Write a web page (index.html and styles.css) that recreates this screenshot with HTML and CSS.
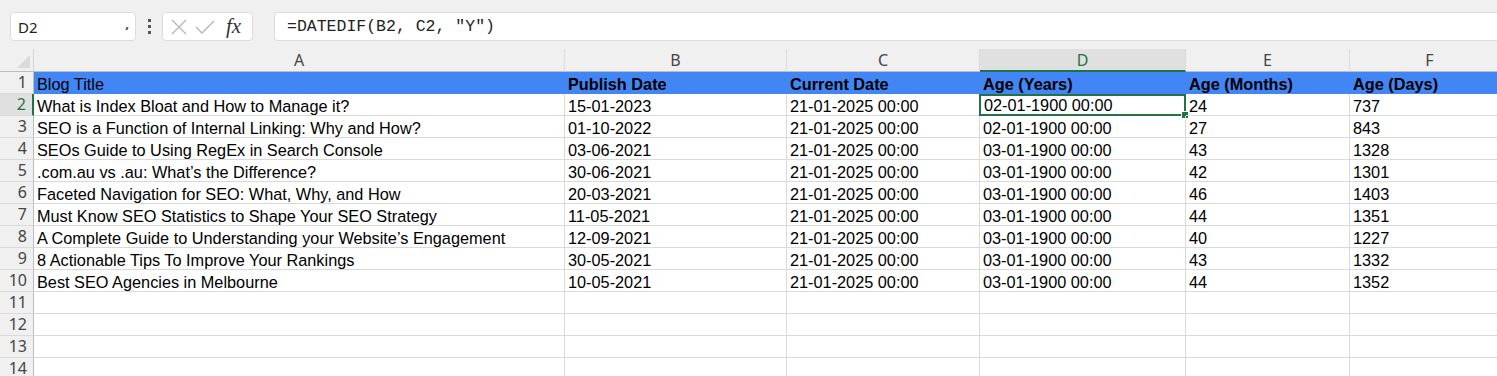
FILE: index.html
```html
<!DOCTYPE html>
<html>
<head>
    <title>Blog Age Sheet</title>
    <link rel="stylesheet" href="styles.css">
</head>
<body>
    <div class="toolbar">
        <div class="name-box">
            <span>D2</span>
            <span class="caret"></span>
        </div>
        <div class="dots"><i></i><i></i><i></i></div>
        <div class="fx-box">
            <svg width="18" height="18" viewBox="0 0 18 18"><path d="M2 2 L16 16 M16 2 L2 16" stroke="#b5b5b5" stroke-width="1.3" fill="none"/></svg>
            <svg width="22" height="18" viewBox="0 0 22 18"><path d="M2 9 L8 15 L20 3" stroke="#b5b5b5" stroke-width="1.3" fill="none"/></svg>
            <span class="fx">fx</span>
        </div>
        <div class="formula">=DATEDIF(B2, C2, "Y")</div>
    </div>

    <div class="sheet">
        <div class="corner"><span></span></div>
        <div class="col-head">A</div>
        <div class="col-head">B</div>
        <div class="col-head">C</div>
        <div class="col-head active">D</div>
        <div class="col-head">E</div>
        <div class="col-head">F</div>
    </div>
    <div id="rows"></div>

    <script>
        // sheet data
        const data = [
            ['Blog Title', 'Publish Date', 'Current Date', 'Age (Years)', 'Age (Months)', 'Age (Days)'],
            ['What is Index Bloat and How to Manage it?', '15-01-2023', '21-01-2025 00:00', '02-01-1900 00:00', '24', '737'],
            ['SEO is a Function of Internal Linking: Why and How?', '01-10-2022', '21-01-2025 00:00', '02-01-1900 00:00', '27', '843'],
            ['SEOs Guide to Using RegEx in Search Console', '03-06-2021', '21-01-2025 00:00', '03-01-1900 00:00', '43', '1328'],
            ['.com.au vs .au: What\u2019s the Difference?', '30-06-2021', '21-01-2025 00:00', '03-01-1900 00:00', '42', '1301'],
            ['Faceted Navigation for SEO: What, Why, and How', '20-03-2021', '21-01-2025 00:00', '03-01-1900 00:00', '46', '1403'],
            ['Must Know SEO Statistics to Shape Your SEO Strategy', '11-05-2021', '21-01-2025 00:00', '03-01-1900 00:00', '44', '1351'],
            ['A Complete Guide to Understanding your Website\u2019s Engagement', '12-09-2021', '21-01-2025 00:00', '03-01-1900 00:00', '40', '1227'],
            ['8 Actionable Tips To Improve Your Rankings', '30-05-2021', '21-01-2025 00:00', '03-01-1900 00:00', '43', '1332'],
            ['Best SEO Agencies in Melbourne', '10-05-2021', '21-01-2025 00:00', '03-01-1900 00:00', '44', '1352']
        ];

        const rows = document.getElementById('rows');
        for (let r = 0; r < 14; r++) {
            const row = document.createElement('div');
            row.className = 'sheet' + (r === 0 ? ' head-row' : '');
            const num = document.createElement('div');
            num.className = 'row-head' + (r === 1 ? ' active' : '');
            num.textContent = r + 1;
            row.appendChild(num);
            const vals = data[r] || ['', '', '', '', '', ''];
            vals.forEach(function(v, c) {
                const cell = document.createElement('div');
                cell.className = 'cell';
                if (r === 0 && c > 0) cell.className += ' bold';
                if (r === 1 && c === 3) {
                    cell.className += ' selected';
                    const h = document.createElement('span');
                    h.className = 'handle';
                    cell.appendChild(h);
                }
                cell.appendChild(document.createTextNode(v));
                row.appendChild(cell);
            });
            rows.appendChild(row);
        }
    </script>
</body>
</html>
```

FILE: styles.css
```css
body { margin: 0; background: #fff; font-family: "Liberation Sans", Arial, sans-serif; overflow: hidden; }

.toolbar { height: 49px; background: #f0f0f0; display: flex; align-items: center; padding: 4px 0 0 10px; box-sizing: border-box; }
.name-box { width: 126px; height: 29px; box-sizing: border-box; background: #fff; border: 1px solid #dcdcdc; border-radius: 4px; display: flex; align-items: center; justify-content: space-between; padding: 0 7px 0 7px; font-family: "Noto Sans", sans-serif; font-size: 15px; color: #222; }
.name-box .caret { width: 2px; height: 3px; background: #555; margin-top: 4px; transform: skewX(-20deg); }
.dots { width: 26px; display: flex; flex-direction: column; align-items: center; gap: 3px; }
.dots i { width: 3px; height: 3px; background: #555; display: block; }
.fx-box { width: 91px; height: 29px; box-sizing: border-box; background: #fff; border: 1px solid #dcdcdc; border-radius: 4px; display: flex; align-items: center; padding-left: 7px; gap: 6px; }
.fx { font-family: "Liberation Serif", serif; font-style: italic; font-size: 21px; color: #333; margin-left: 4px; }
.formula { flex: 1; margin-left: 21px; height: 29px; box-sizing: border-box; background: #fff; border: 1px solid #dcdcdc; border-right: none; border-radius: 4px 0 0 4px; display: flex; align-items: center; padding-left: 12px; font-family: "Liberation Mono", monospace; font-size: 16.5px; color: #222; }

.sheet { display: grid; grid-template-columns: 34px 531px 222px 193px 206px 164px 160px; }
.corner { height: 23px; background: #f0f0f0; border-right: 1px solid #d4d4d4; border-bottom: 1px solid #bdbdbd; box-sizing: border-box; position: relative; }
.corner span { position: absolute; right: 3px; bottom: 3px; width: 0; height: 0; border-left: 13px solid transparent; border-bottom: 13px solid #dadada; }
.col-head { height: 23px; box-sizing: border-box; background: #f0f0f0; border-right: 1px solid #dadada; border-bottom: 1px solid #bdbdbd; text-align: center; font-family: "Noto Sans", sans-serif; font-size: 16px; line-height: 22px; color: #444; }
.col-head.active { background: #e0e0e0; color: #217346; border-bottom: 2px solid #217346; }

.row-head { height: 22px; box-sizing: border-box; background: #f0f0f0; border-right: 1px solid #bdbdbd; border-bottom: 1px solid #dadada; text-align: right; padding-right: 6px; font-family: "Noto Sans", sans-serif; font-size: 16px; line-height: 21px; color: #444; }
.row-head.active { background: #e0e0e0; color: #217346; border-right: 2px solid #217346; }

.cell { height: 22px; box-sizing: border-box; border-right: 1px solid #dadada; border-bottom: 1px solid #dadada; padding: 1px 0 0 3px; font-size: 16.3px; line-height: 22px; color: #000; white-space: nowrap; overflow: visible; position: relative; }
.head-row .cell { background: #4285f4; border-color: #4285f4; }
.cell.bold { font-weight: bold; }
.cell.selected { border: 2px solid #217346; margin-left: -1px; padding: 0 0 0 3px; line-height: 19px; }
.handle { position: absolute; right: -5px; bottom: -5px; width: 6px; height: 6px; background: #217346; border: 1px solid #fff; }
```
